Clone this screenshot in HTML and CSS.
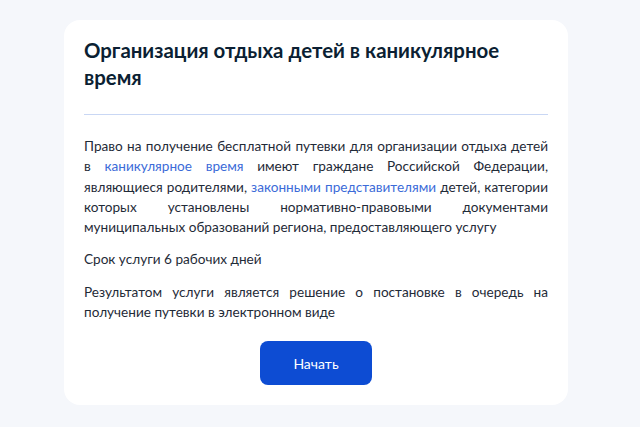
FILE: index.html
```html
<!DOCTYPE html>
<html lang="ru">
<head>
    <meta charset="UTF-8" />
    <meta name="viewport" content="width=device-width, initial-scale=1" />
    <title>Организация отдыха детей в каникулярное время</title>
    <link rel="stylesheet" href="styles.css">
</head>
<body>
    <main class="page">
        <section class="service-card">
            <h1 class="service-title">Организация отдыха детей в каникулярное время</h1>
            <div class="service-body">
                <p class="service-text">
                    Право на получение бесплатной путевки для организации отдыха детей
                    в <a href="#">каникулярное время</a> имеют граждане Российской Федерации,
                    являющиеся родителями, <a href="#">законными представителями</a> детей, категории
                    которых установлены нормативно-правовыми документами
                    муниципальных образований региона, предоставляющего услугу
                </p>
                <p class="service-text">Срок услуги 6 рабочих дней</p>
                <p class="service-text">
                    Результатом услуги является решение о постановке в очередь на
                    получение путевки в электронном виде
                </p>
            </div>
            <div class="service-actions">
                <button type="button" class="btn-primary">Начать</button>
            </div>
        </section>
    </main>
</body>
</html>
```

FILE: styles.css
```css
/* Grundlayout */
* {
    box-sizing: border-box;
}
html, body {
    margin: 0;
    height: 100%;
}
body {
    background: #f5f7fb;
    font-family: Lato, "Open Sans", sans-serif;
    color: #0b1f33;
}

.page {
    padding: 20px 72px 22px 64px;
}

/* Karte */
.service-card {
    background: #fff;
    border-radius: 16px;
    padding: 17px 20px 20px;
}

.service-title {
    margin: 0;
    font-size: 20.4px;
    line-height: 26.5px;
    font-weight: 700;
    color: #0b1f33;
    padding-bottom: 24px;
    border-bottom: 1px solid #c9d7f4;
}

.service-body {
    padding-top: 21px;
}
.service-text {
    margin: 0;
    font-size: 13.6px;
    line-height: 20.25px;
    text-align: justify;
    color: #1f2b38;
}
.service-text + .service-text {
    margin-top: 12px;
}
.service-text a {
    color: #3c6bd8;
    text-decoration: none;
}

/* Button */
.service-actions {
    display: flex;
    justify-content: center;
    padding-top: 19px;
}
.btn-primary {
    width: 112px;
    height: 44px;
    border: none;
    border-radius: 8px;
    background: #0d4cd3;
    color: #fff;
    font-family: inherit;
    font-size: 14px;
    cursor: pointer;
}
```
